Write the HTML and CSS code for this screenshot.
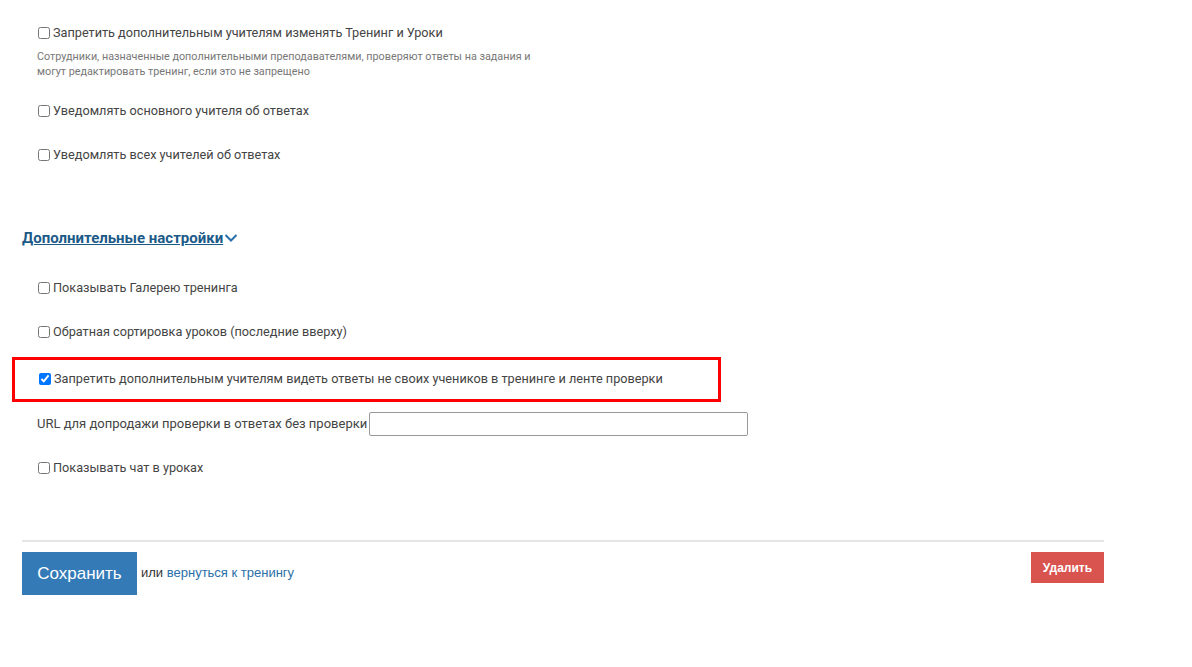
FILE: index.html
```html
<!DOCTYPE html>
<html lang="ru">
<head>
    <meta charset="UTF-8">
    <title>Настройки тренинга</title>
    <link rel="stylesheet" href="styles.css">
</head>
<body>
    <div class="page">
        <!-- Teachers -->
        <div class="field">
            <label><input type="checkbox"> Запретить дополнительным учителям изменять Тренинг и Уроки</label>
            <p class="hint">Сотрудники, назначенные дополнительными преподавателями, проверяют ответы на задания и<br>могут редактировать тренинг, если это не запрещено</p>
        </div>
        <div class="field">
            <label><input type="checkbox"> Уведомлять основного учителя об ответах</label>
        </div>
        <div class="field">
            <label><input type="checkbox"> Уведомлять всех учителей об ответах</label>
        </div>

        <!-- Extra settings -->
        <a class="toggle" href="#">Дополнительные настройки<svg width="14" height="10" viewBox="0 0 14 10"><path d="M1.5 2 L7 7.5 L12.5 2" fill="none" stroke="#2a6fa8" stroke-width="2"/></svg></a>

        <div class="field">
            <label><input type="checkbox"> Показывать Галерею тренинга</label>
        </div>
        <div class="field">
            <label><input type="checkbox"> Обратная сортировка уроков (последние вверху)</label>
        </div>
        <div class="field marked">
            <label><input type="checkbox" checked> Запретить дополнительным учителям видеть ответы не своих учеников в тренинге и ленте проверки</label>
        </div>
        <div class="field url">
            <label>URL для допродажи проверки в ответах без проверки</label>
            <input type="text">
        </div>
        <div class="field">
            <label><input type="checkbox"> Показывать чат в уроках</label>
        </div>

        <div class="actions">
            <button class="btn-save">Сохранить</button>
            <span class="or">или <a href="#">вернуться к тренингу</a></span>
            <button class="btn-delete">Удалить</button>
        </div>
    </div>
</body>
</html>
```

FILE: styles.css
```css
body {
    margin: 0;
    background-color: #ffffff;
    font-family: Roboto, "Liberation Sans", sans-serif;
    font-size: 12.7px;
    color: #444;
}
.page {
    width: 1082px;
    padding: 24px 0 0 22px;
}
.field {
    padding: 0 0 0 15px;
    margin-bottom: 26px;
}
.field label {
    display: flex;
    align-items: center;
    height: 18px;
    line-height: 18px;
}
.field input[type="checkbox"] {
    width: 12px;
    height: 12px;
    margin: 0 3px 0 1px;
}
.hint {
    margin: 7px 0 -3px 0;
    font-size: 10.8px;
    line-height: 15px;
    color: #777;
}
.toggle {
    display: flex;
    align-items: center;
    width: max-content;
    height: 20px;
    margin: 64px 0 31px 0;
    font-size: 15px;
    font-weight: bold;
    color: #1c5a88;
    text-decoration: underline;
}
.toggle svg {
    margin-left: 1px;
}
.marked {
    margin: -10px 383px 10px -10px;
    padding: 10px 0 11px 23px;
    border: 3px solid #ff0000;
}
.url {
    display: flex;
    align-items: center;
    margin-bottom: 23px;
    font-size: 13px;
}
.url label {
    display: inline;
}
.url input {
    width: 373px;
    height: 20px;
    margin-left: 2px;
    border: 1px solid #999;
    border-radius: 2px;
}
.actions {
    display: flex;
    align-items: flex-start;
    margin-top: 63px;
    padding-top: 10px;
    border-top: 2px solid #e5e5e5;
}
.btn-save {
    width: 115px;
    height: 43px;
    background-color: #337ab7;
    color: #ffffff;
    border: none;
    font-family: "Liberation Sans", sans-serif;
    font-size: 17px;
}
.or {
    margin: 13px 0 0 4px;
    font-family: "Liberation Sans", sans-serif;
    font-size: 13px;
    color: #333;
}
.or a {
    color: #2a6fa8;
    text-decoration: none;
}
.btn-delete {
    margin-left: auto;
    width: 73px;
    height: 31px;
    background-color: #d9534f;
    color: #ffffff;
    border: none;
    font-family: "Liberation Sans", sans-serif;
    font-weight: bold;
    font-size: 12px;
}
```
